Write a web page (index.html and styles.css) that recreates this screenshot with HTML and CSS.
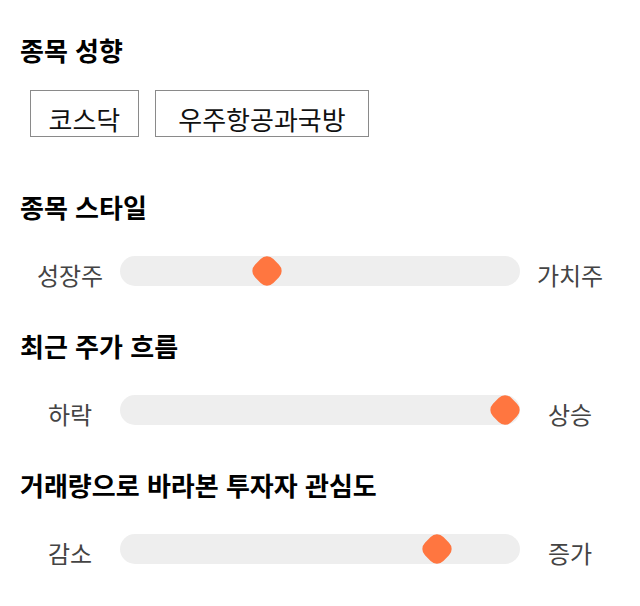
FILE: index.html
```html
<!DOCTYPE html>
<html lang="ko">
<head>
<meta charset="utf-8">
<title>종목 성향</title>
<link rel="stylesheet" href="styles.css">
</head>
<body>
<main class="panel">
  <section class="section">
    <h2 class="title title-first">종목 성향</h2>
    <div class="tags">
      <span class="tag tag-short">코스닥</span>
      <span class="tag tag-long">우주항공과국방</span>
    </div>
  </section>

  <section class="section">
    <h2 class="title title-gap-tags">종목 스타일</h2>
    <div class="slider-row">
      <span class="label">성장주</span>
      <div class="track"><span class="thumb" style="--v:0.357"></span></div>
      <span class="label">가치주</span>
    </div>
  </section>

  <section class="section">
    <h2 class="title">최근 주가 흐름</h2>
    <div class="slider-row">
      <span class="label">하락</span>
      <div class="track"><span class="thumb" style="--v:1"></span></div>
      <span class="label">상승</span>
    </div>
  </section>

  <section class="section">
    <h2 class="title">거래량으로 바라본 투자자 관심도</h2>
    <div class="slider-row">
      <span class="label">감소</span>
      <div class="track"><span class="thumb" style="--v:0.815"></span></div>
      <span class="label">증가</span>
    </div>
  </section>
</main>
</body>
</html>
```

FILE: styles.css
```css
* {
  box-sizing: border-box;
}

body {
  margin: 0;
  background: #ffffff;
  font-family: "Noto Sans CJK KR", "Noto Sans", sans-serif;
  color: #000000;
}

.panel {
  width: 640px;
  padding: 0 20px;
}

.title {
  margin: 39px 0 0 0;
  font-size: 26px;
  font-weight: 700;
  line-height: 34px;
  color: #000000;
}

.title-first {
  margin-top: 33px;
}

.title-gap-tags {
  margin-top: 53px;
}

.tags {
  display: flex;
  gap: 16px;
  margin: 23px 0 0 10px;
}

.tag {
  display: block;
  border: 1px solid #8a8a8a;
  font-size: 26px;
  line-height: 33px;
  padding-top: 11px;
  padding-bottom: 1px;
  color: #111111;
}

.tag-short {
  padding-left: 17.5px;
  padding-right: 17.5px;
}

.tag-long {
  padding-left: 22.5px;
  padding-right: 22.5px;
}

.slider-row {
  display: grid;
  grid-template-columns: 100px 400px 100px;
  align-items: center;
  margin-top: 27px;
}

.label {
  display: block;
  text-align: center;
  font-size: 24px;
  line-height: 30px;
  padding-top: 9px;
  color: #444444;
}

.track {
  position: relative;
  height: 30px;
  border-radius: 15px;
  background: #eeeeee;
}

.thumb {
  position: absolute;
  top: 50%;
  left: calc(15px + (100% - 30px) * var(--v));
  width: 26px;
  height: 26px;
  border-radius: 9px;
  background: #ff7640;
  transform: translate(-50%, -50%) rotate(45deg);
}
```
